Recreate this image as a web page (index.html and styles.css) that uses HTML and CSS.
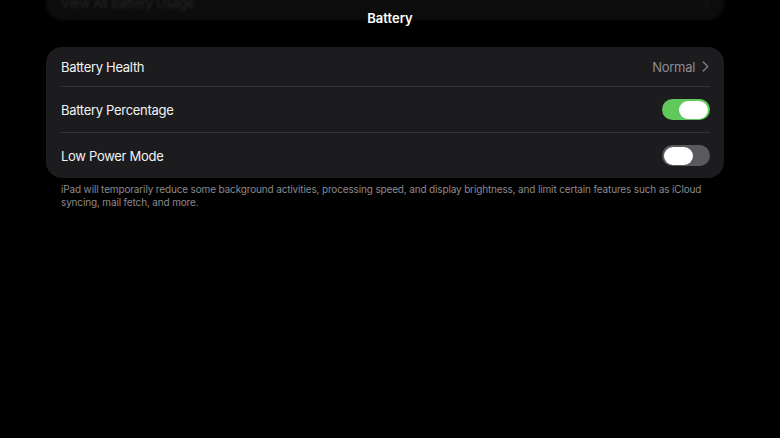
FILE: index.html
```html
<!DOCTYPE html>
<html>
<head>
<meta charset="utf-8">
<link rel="stylesheet" href="styles.css">
</head>
<body>
<div class="page">
  <div class="ghost">
    <span class="ghost-label">View All Battery Usage</span>
    <span class="ghost-chev">&#x203A;</span>
  </div>
  <div class="title">Battery</div>
  <div class="card">
    <div class="row">
      <span class="label">Battery Health</span>
      <span class="value">Normal
        <svg class="chev" width="7" height="11" viewBox="0 0 7 11"><path d="M1.2 1l4.5 4.5L1.2 10" fill="none" stroke="#7c7c80" stroke-width="1.4" stroke-linecap="round" stroke-linejoin="round"/></svg>
      </span>
    </div>
    <div class="row">
      <span class="label">Battery Percentage</span>
      <span class="toggle on"><span class="knob"></span></span>
    </div>
    <div class="row">
      <span class="label">Low Power Mode</span>
      <span class="toggle"><span class="knob"></span></span>
    </div>
  </div>
  <p class="footer">iPad will temporarily reduce some background activities, processing speed, and display brightness, and limit certain features such as iCloud syncing, mail fetch, and more.</p>
</div>
</body>
</html>
```
FILE: styles.css
```css
html, body {
  margin: 0;
  padding: 0;
  background: #000;
  height: 100%;
  overflow: hidden;
}
body {
  font-family: Inter, "Open Sans", sans-serif;
  color: #fff;
}
.page {
  position: relative;
  padding: 1px 56px 0 46px;
}
.ghost {
  margin-top: -15px;
  height: 34px;
  background: #0c0c0c;
  border-radius: 16px;
  display: flex;
  align-items: center;
  justify-content: space-between;
  padding: 0 14px 0 15px;
  color: #262626;
  font-size: 13px;
  letter-spacing: -0.3px;
  filter: blur(0.8px);
}
.ghost-chev {
  font-size: 16px;
  color: #1a1a1a;
}
.title {
  position: absolute;
  top: 10px;
  left: 0;
  right: 0;
  text-align: center;
  font-size: 13px;
  font-weight: 600;
  color: #fff;
}
.card {
  margin-top: 27px;
  background: #1c1c1e;
  border-radius: 16px;
  padding: 0 14px 0 15px;
}
.row {
  display: flex;
  align-items: center;
  justify-content: space-between;
  height: 45px;
  border-top: 1px solid #333336;
}
.row:first-child {
  border-top: none;
  height: 39px;
}
.label {
  font-size: 13px;
  letter-spacing: -0.3px;
  color: #f2f2f2;
}
.value {
  display: flex;
  align-items: center;
  gap: 7px;
  font-size: 13px;
  letter-spacing: -0.3px;
  color: #8d8d92;
  padding-right: 1px;
}
.toggle {
  width: 48px;
  height: 21px;
  border-radius: 11px;
  background: #5a5a5e;
  display: flex;
  align-items: center;
  padding: 0 2px;
  box-sizing: border-box;
}
.toggle.on {
  background: #5fc95c;
  justify-content: flex-end;
}
.knob {
  width: 29px;
  height: 18px;
  border-radius: 9px;
  background: #fff;
}
.footer {
  margin: 5px 0 0;
  padding: 0 15px;
  font-size: 10px;
  letter-spacing: -0.15px;
  line-height: 12.5px;
  color: #8a8a8e;
}
```
